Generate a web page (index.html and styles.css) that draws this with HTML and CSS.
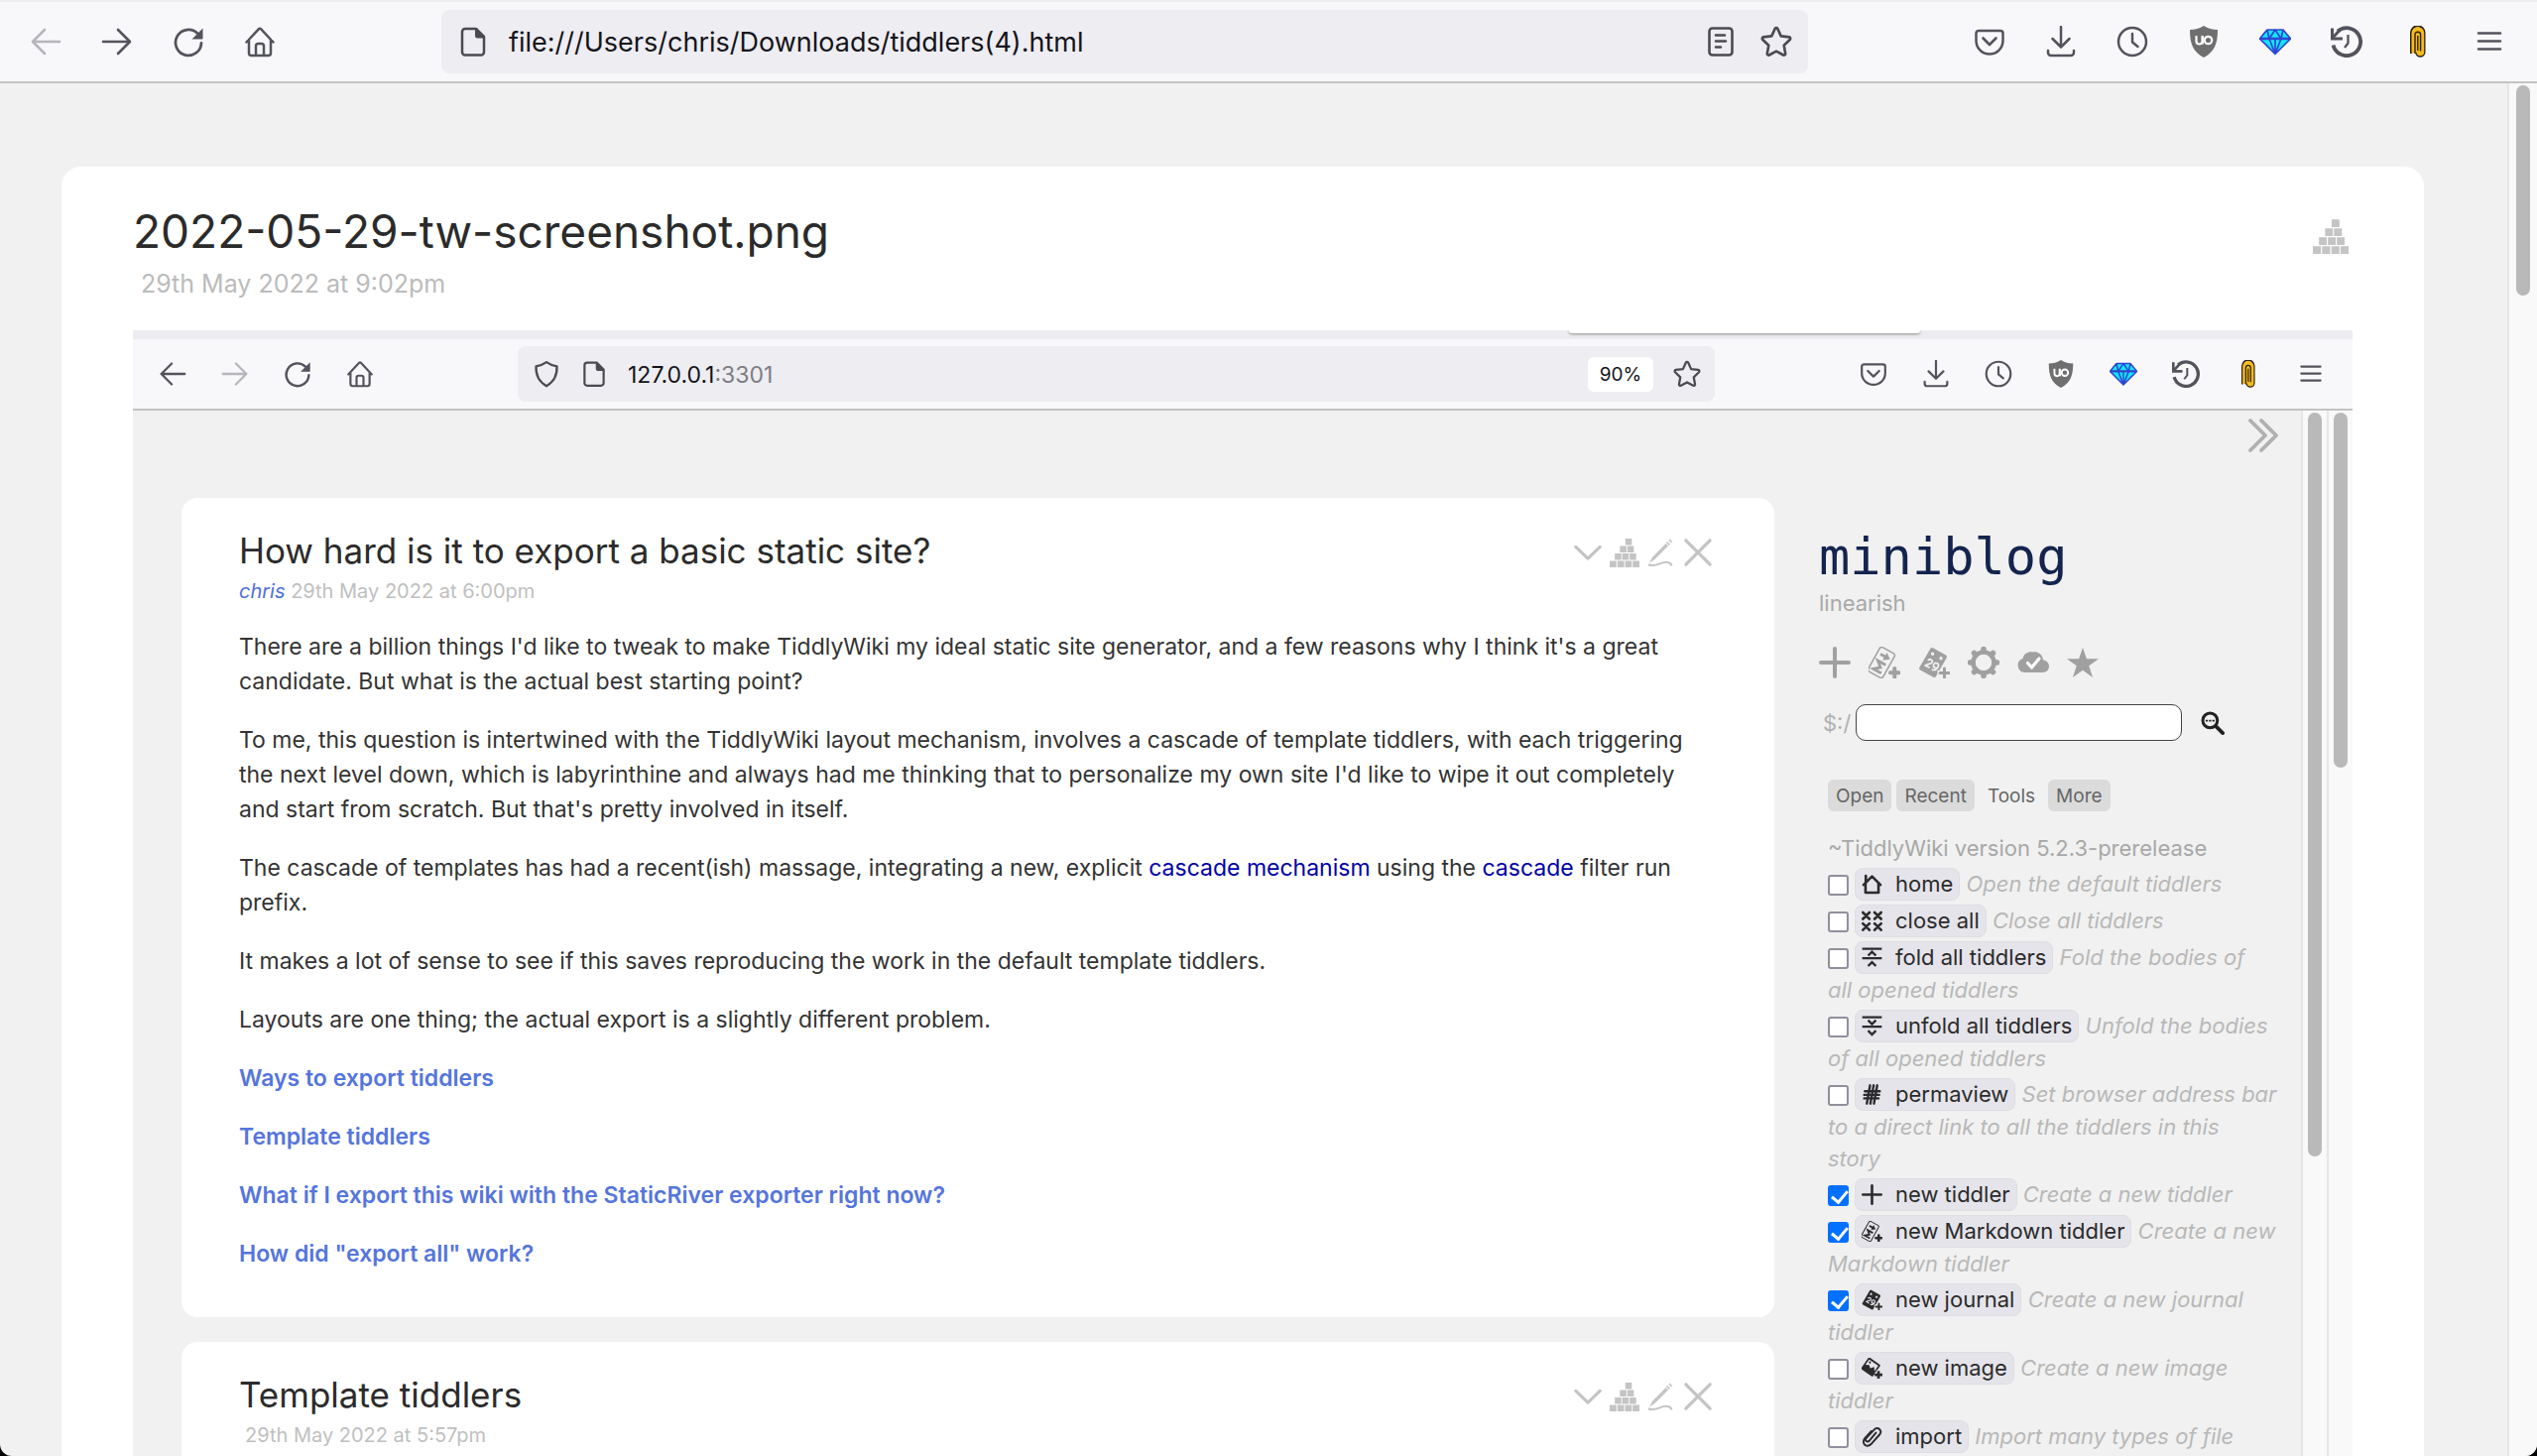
FILE: index.html
```html
<!DOCTYPE html>
<html lang="en">
<head>
<meta charset="utf-8">
<title>2022-05-29-tw-screenshot.png</title>
<link rel="stylesheet" href="styles.css">
</head>
<body>
<svg class="sprite" aria-hidden="true">
  <symbol id="i-back" viewBox="0 0 32 32"><path d="M15 4 3 16l12 12M3 16h27" fill="none" stroke="currentColor" stroke-width="2.6" stroke-linecap="round" stroke-linejoin="round"/></symbol>
  <symbol id="i-forward" viewBox="0 0 32 32"><path d="M17 4l12 12-12 12M29 16H2" fill="none" stroke="currentColor" stroke-width="2.6" stroke-linecap="round" stroke-linejoin="round"/></symbol>
  <symbol id="i-reload" viewBox="0 0 32 32"><path d="M29 17.500A13 13 0 1 1 25 7.500" fill="none" stroke="currentColor" stroke-width="2.8" stroke-linecap="round"/><path d="M30.500 2.500v10a1 1 0 0 1-1 1H19.500z" fill="currentColor"/></symbol>
  <symbol id="i-home" viewBox="0 0 32 32"><path d="M2.500 16.500 15 3.200a1.400 1.400 0 0 1 2 0L29.500 16.500M5 14v13.500A2.500 2.500 0 0 0 7.500 30h17a2.500 2.500 0 0 0 2.500-2.500V14M12 30v-9.500a2.500 2.500 0 0 1 2.500-2.500h3a2.500 2.500 0 0 1 2.500 2.500V30" fill="none" stroke="currentColor" stroke-width="2.500" stroke-linecap="round"/></symbol>
  <symbol id="i-doc" viewBox="0 0 32 32"><path d="M8 3h11l8 8v15.500a3 3 0 0 1-3 3H8a3 3 0 0 1-3-3V6a3 3 0 0 1 3-3z" fill="none" stroke="currentColor" stroke-width="2.500" stroke-linejoin="round"/><path d="M18 2v8a2.500 2.500 0 0 0 2.500 2.500H28z" fill="currentColor"/></symbol>
  <symbol id="i-shield" viewBox="0 0 32 32"><path d="M16 2.500c4 2.800 8 4.300 12 4.800.4 9-3 17.500-12 22.700C7 24.800 3.600 16.300 4 7.300c4-.5 8-2 12-4.800z" fill="none" stroke="currentColor" stroke-width="2.600" stroke-linejoin="round"/></symbol>
  <symbol id="i-reader" viewBox="0 0 32 32"><rect x="4.500" y="2.500" width="23" height="27" rx="3" fill="none" stroke="currentColor" stroke-width="2.600"/><path d="M11 9.500h9M11 15.500h10M11 21.500h5" stroke="currentColor" stroke-width="2.600" stroke-linecap="round"/></symbol>
  <symbol id="i-star-line" viewBox="0 0 32 32"><path d="M14.700 2.900a1.500 1.500 0 0 1 2.600 0l3.400 7.500 8.200 1a1.500 1.500 0 0 1 .8 2.600l-6 5.800 1.500 8.100a1.500 1.500 0 0 1-2.100 1.600L16 25.700l-7.100 3.800a1.500 1.500 0 0 1-2.100-1.600l1.500-8.100-6-5.800a1.500 1.500 0 0 1 .8-2.600l8.200-1z" fill="none" stroke="currentColor" stroke-width="2.600" stroke-linejoin="round"/></symbol>
  <symbol id="i-pocket" viewBox="0 0 32 32"><path d="M5 5h22a2.500 2.500 0 0 1 2.500 2.500V15a13.500 13.500 0 0 1-27 0V7.500A2.500 2.500 0 0 1 5 5z" fill="none" stroke="currentColor" stroke-width="2.500"/><path d="m9.500 12.500 6.500 6.500 6.500-6.500" fill="none" stroke="currentColor" stroke-width="2.600" stroke-linecap="round" stroke-linejoin="round"/></symbol>
  <symbol id="i-download" viewBox="0 0 32 32"><path d="M16 1v20M7.500 13l8.500 8.500 8.500-8.500M3 25v2a3 3 0 0 0 3 3h20a3 3 0 0 0 3-3v-2" fill="none" stroke="currentColor" stroke-width="2.500" stroke-linecap="round" stroke-linejoin="round"/></symbol>
  <symbol id="i-clock" viewBox="0 0 32 32"><circle cx="16" cy="16" r="14" fill="none" stroke="currentColor" stroke-width="2.500"/><path d="M16 8v8.500l5.500 4.500" fill="none" stroke="currentColor" stroke-width="2.500" stroke-linecap="round" stroke-linejoin="round"/></symbol>
  <symbol id="i-ublock" viewBox="0 0 32 32"><path d="M16 0c4 2.700 9 4 14 4 0 14-3 22-14 28C5 26 2 18 2 4c5 0 10-1.300 14-4z" fill="#6f6f6f"/><path d="M8.500 10v5.500a3 3 0 0 0 6 0V10M14.800 10v8.500" fill="none" stroke="#fff" stroke-width="2.200"/><circle cx="20.500" cy="14.500" r="3.700" fill="none" stroke="#fff" stroke-width="2.200"/></symbol>
  <symbol id="i-gem" viewBox="0 0 32 32"><path d="M8 4h16l7.500 9L16 28.500.5 13z" fill="#12e6fa"/><path d="M8 4h16l7.500 9L16 28.500.5 13zM.5 13h31M8 4l2 9 6 15.500L22 13l2-9M10 13l6-9 6 9M3.500 9 8 4M16 13v15.500" fill="none" stroke="#2f45d2" stroke-width="1.700" stroke-linejoin="round"/><path d="M1 13h30" stroke="#2f45d2" stroke-width="2.500"/></symbol>
  <symbol id="i-history" viewBox="0 0 32 32"><path d="M2.500 19.500A14 14 0 1 0 7 5.500" fill="none" stroke="currentColor" stroke-width="3.800"/><path d="M1.500 2.500V13h10.500" fill="none" stroke="currentColor" stroke-width="3"/><path d="M2 12 9 4.500" stroke="currentColor" stroke-width="3"/><path d="M17.500 9v8.500L14 22" fill="none" stroke="currentColor" stroke-width="2.300"/></symbol>
  <symbol id="i-clip" viewBox="0 0 32 32"><path d="M9 28V7a6.700 6.700 0 0 1 13.500 0v19.500a4.200 4.200 0 0 1-8.400 0" fill="none" stroke="#30201a" stroke-width="2"/><path d="M9.500 27.500V7.500a6.300 6.300 0 0 1 12.700 0v19a3.800 3.800 0 0 1-7.600 0H13V27.500z" fill="#f3bc17"/><path d="M13 28V9a2.600 2.600 0 0 1 5.600 0v16.500M15.800 10v15" fill="none" stroke="#30201a" stroke-width="1.400"/></symbol>
  <symbol id="i-menu" viewBox="0 0 32 32"><path d="M5 7.500h22M5 15.500h22M5 23.500h22" stroke="currentColor" stroke-width="2.600" stroke-linecap="round"/></symbol>

  <symbol id="i-pyramid" viewBox="0 0 32 32"><path d="M16.800 1h7v7h-7zM11 9h7v7h-7zM19 9h7v7h-7zM5.500 17h7v7h-7zM13.500 17h7v7h-7zM21.500 17h7v7h-7zM0 25h7.200v7H0zM8.300 25h7.200v7H8.300zM16.600 25h7.200v7h-7.200zM24.800 25H32v7h-7.200z" fill="currentColor"/></symbol>
  <symbol id="i-chevron" viewBox="0 0 32 32"><path d="m3 10 13 12.500L29 10" fill="none" stroke="currentColor" stroke-width="3.400" stroke-linecap="round" stroke-linejoin="round"/></symbol>
  <symbol id="i-pencil" viewBox="0 0 32 32"><path d="M21 6.500 23.500 9 9 23.500l-6 4L6.500 21z" fill="currentColor"/><path d="m21.800 4.800 3.200 3M24.500 2.300l3 3" stroke="currentColor" stroke-width="1.800"/><path d="M2 29c9 4 15-5 22-2 2 .8 3 1.700 3 3.500" fill="none" stroke="currentColor" stroke-width="2.200"/></symbol>
  <symbol id="i-close" viewBox="0 0 32 32"><path d="m3 3 26 26M29 3 3 29" stroke="currentColor" stroke-width="3.400" stroke-linecap="round"/></symbol>
  <symbol id="i-double" viewBox="0 0 32 36"><path d="m3 3 15 15L3 33M14 3l15 15-15 15" fill="none" stroke="currentColor" stroke-width="3.800" stroke-linecap="round" stroke-linejoin="round"/></symbol>

  <symbol id="i-plus" viewBox="0 0 32 32"><path d="M16 2v28M2 16h28" stroke="currentColor" stroke-width="4" stroke-linecap="round"/></symbol>
  <symbol id="i-markdown" viewBox="0 0 32 32"><g transform="rotate(-61 13 16)"><rect x="-1" y="7.500" width="28" height="17" rx="2.500" fill="none" stroke="currentColor" stroke-width="1.500"/><path d="M3.500 21v-9l4.700 5.500 4.700-5.500v9" fill="none" stroke="currentColor" stroke-width="2.800"/><path d="M20 11v8" stroke="currentColor" stroke-width="2.800"/><path d="M15.500 16h9L20 22z" fill="currentColor"/></g><path d="M26.300 22v8.500M22 26.300h8.500" stroke="currentColor" stroke-width="4" stroke-linecap="round"/></symbol>
  <symbol id="i-journal" viewBox="0 0 32 32"><path fill-rule="evenodd" d="M15 1.200 28 8.500a2 2 0 0 1 .8 2.600L18 30a2 2 0 0 1-2.600.8L2 23.500a2 2 0 0 1-.7-2.600L12.400 2a2 2 0 0 1 2.600-.8zM14.500 5.500a1.700 1.700 0 1 0 .1 0zM23 10a1.700 1.700 0 1 0 .1 0z" fill="currentColor"/><g transform="rotate(28 14 18)"><path d="M8.500 16.500c.5-3.500 5-3 4.500 0-.3 2-4 3.500-4.500 5.500H13.500M20.500 17a2.500 2.500 0 1 0-2.500 2.500c1.500 0 2.500-1 2.500-2.500 0 3.500-1 5.500-4.500 5.500" fill="none" stroke="#f1f1f1" stroke-width="1.700"/></g><path d="M26.500 19.500v14M19.500 26.500H33" stroke="#f1f1f1" stroke-width="5.500"/><path d="M26.500 22v9M22 26.500h9" stroke="currentColor" stroke-width="3" stroke-linecap="round"/></symbol>
  <symbol id="i-gear" viewBox="0 0 32 32"><circle cx="16" cy="16" r="10.500" fill="none" stroke="currentColor" stroke-width="4.500"/><path d="M16 2.500V5M16 27v2.500M2.500 16H5M27 16h2.500M6.500 6.500l1.700 1.700M23.800 23.800l1.700 1.700M25.500 6.500l-1.700 1.700M8.200 23.800l-1.700 1.700" stroke="currentColor" stroke-width="5.500" stroke-linecap="round"/></symbol>
  <symbol id="i-cloud" viewBox="0 0 32 32"><path d="M7.500 26A7.200 7.200 0 0 1 5.500 12 C6.500 6.500 12 4.500 15.500 5.500c4-1 10 1.500 10.500 8C30 14 32 17 32 20s-2.500 6-6.500 6z" fill="currentColor"/><path d="m10.500 16.500 4 4.500 7.500-9" fill="none" stroke="#fff" stroke-width="3.200" stroke-linecap="round" stroke-linejoin="round"/></symbol>
  <symbol id="i-star" viewBox="0 0 32 32"><path d="m16 1 3.900 11.300H32l-9.700 7L26 31l-10-7.200L6 31l3.700-11.700-9.700-7h12.100z" fill="currentColor"/></symbol>
  <symbol id="i-search" viewBox="0 0 32 32"><circle cx="12.500" cy="12.500" r="9.800" fill="none" stroke="currentColor" stroke-width="4"/><path d="m20.500 20.500 9 9" stroke="currentColor" stroke-width="5" stroke-linecap="round"/><path d="M6.500 11.500h3v2.500h-3zM11 11.500h3v2.500h-3zM15.500 11.500h3v2.500h-3z" fill="currentColor"/></symbol>
  <symbol id="i-house" viewBox="0 0 32 32"><path d="M3 17 16 4l13 13M6 15v14h20V15M6.500 3v9" fill="none" stroke="currentColor" stroke-width="4" stroke-linecap="round" stroke-linejoin="round"/></symbol>
  <symbol id="i-closeall" viewBox="0 0 32 32"><path d="m2 3 10 10M12 3 2 13M20 3l10 10M30 3 20 13M2 20l10 10M12 20 2 30M20 20l10 10M30 20 20 30" stroke="currentColor" stroke-width="4" stroke-linecap="round"/></symbol>
  <symbol id="i-fold" viewBox="0 0 32 32"><path d="M1 2.500h30M1 17h30M10 13l6-6 6 6M10 29l6-6 6 6" fill="none" stroke="currentColor" stroke-width="3.600"/></symbol>
  <symbol id="i-unfold" viewBox="0 0 32 32"><path d="M1 2.500h30M1 17h30M10 7l6 6 6-6M10 23l6 6 6-6" fill="none" stroke="currentColor" stroke-width="3.600"/></symbol>
  <symbol id="i-hash" viewBox="0 0 32 32"><path d="M13 2 8 30M18.500 2l-5 28M24 2l-5 28M5 11h23M4 16.500h23M4 22h22" stroke="currentColor" stroke-width="3.600" stroke-linecap="round"/></symbol>
  <symbol id="i-image" viewBox="0 0 32 32"><g transform="rotate(35 14 14)"><rect x="3" y="3" width="22" height="22" rx="2" fill="currentColor"/><path d="M5.500 6h17v10l-4-5-4 5-4-3-5 3z" fill="#e5e4ea"/><circle cx="9" cy="9" r="1.600" fill="currentColor"/></g><path d="M26 19v13M20 26h12" stroke="#e5e4ea" stroke-width="7"/><path d="M26 20v12M20 26h12" stroke="currentColor" stroke-width="4"/></symbol>
  <symbol id="i-attach" viewBox="0 0 32 32"><path d="M22 10 11.500 22.500a3 3 0 0 1-4.500-4L19 5.500c3-3.500 6.500-3 8.500-1s2.500 5.500 0 8.500L14.500 27.500c-3 3-7 3-9.500 1s-3-6.500 0-10L15 7.500" fill="none" stroke="currentColor" stroke-width="3" stroke-linecap="round"/></symbol>
</svg>

<div class="window">
  <header class="chrome">
    <nav class="chrome-group">
      <button class="tool tool-off" aria-label="Back"><svg><use href="#i-back"/></svg></button>
      <button class="tool" aria-label="Forward"><svg><use href="#i-forward"/></svg></button>
      <button class="tool" aria-label="Reload"><svg><use href="#i-reload"/></svg></button>
      <button class="tool" aria-label="Home"><svg><use href="#i-home"/></svg></button>
    </nav>
    <div class="address">
      <svg class="address-icon"><use href="#i-doc"/></svg>
      <input class="address-input" type="text" aria-label="Address" value="file:///Users/chris/Downloads/tiddlers(4).html">
      <button class="address-button" aria-label="Reader view"><svg><use href="#i-reader"/></svg></button>
      <button class="address-button" aria-label="Bookmark"><svg><use href="#i-star-line"/></svg></button>
    </div>
    <div class="chrome-group">
      <button class="tool" aria-label="Pocket"><svg><use href="#i-pocket"/></svg></button>
      <button class="tool" aria-label="Downloads"><svg><use href="#i-download"/></svg></button>
      <button class="tool" aria-label="Recent"><svg><use href="#i-clock"/></svg></button>
      <button class="tool" aria-label="uBlock"><svg><use href="#i-ublock"/></svg></button>
      <button class="tool" aria-label="Gem"><svg><use href="#i-gem"/></svg></button>
      <button class="tool" aria-label="History"><svg><use href="#i-history"/></svg></button>
      <button class="tool" aria-label="Clip"><svg><use href="#i-clip"/></svg></button>
      <button class="tool" aria-label="Menu"><svg><use href="#i-menu"/></svg></button>
    </div>
  </header>

  <div class="viewport">
    <main class="page">
      <article class="tiddler">
        <div class="tiddler-head">
          <h1 class="tiddler-title">2022-05-29-tw-screenshot.png</h1>
          <button class="tiddler-tool" aria-label="Pyramid"><svg><use href="#i-pyramid"/></svg></button>
        </div>
        <p class="tiddler-date">29th May 2022 at 9:02pm</p>

        <div class="shot">
          <div class="shot-tabs"><div class="shot-tab"></div></div>
          <header class="chrome chrome-small">
            <nav class="chrome-group">
              <button class="tool" aria-label="Back"><svg><use href="#i-back"/></svg></button>
              <button class="tool tool-off" aria-label="Forward"><svg><use href="#i-forward"/></svg></button>
              <button class="tool" aria-label="Reload"><svg><use href="#i-reload"/></svg></button>
              <button class="tool" aria-label="Home"><svg><use href="#i-home"/></svg></button>
            </nav>
            <div class="address">
              <svg class="address-icon"><use href="#i-shield"/></svg>
              <svg class="address-icon"><use href="#i-doc"/></svg>
              <div class="address-input" role="textbox" aria-label="Address" contenteditable="true">127.0.0.1<span class="port">:3301</span></div>
              <button class="zoom-level">90%</button>
              <button class="address-button" aria-label="Bookmark"><svg><use href="#i-star-line"/></svg></button>
            </div>
            <div class="chrome-group">
              <button class="tool" aria-label="Pocket"><svg><use href="#i-pocket"/></svg></button>
              <button class="tool" aria-label="Downloads"><svg><use href="#i-download"/></svg></button>
              <button class="tool" aria-label="Recent"><svg><use href="#i-clock"/></svg></button>
              <button class="tool" aria-label="uBlock"><svg><use href="#i-ublock"/></svg></button>
              <button class="tool" aria-label="Gem"><svg><use href="#i-gem"/></svg></button>
              <button class="tool" aria-label="History"><svg><use href="#i-history"/></svg></button>
              <button class="tool" aria-label="Clip"><svg><use href="#i-clip"/></svg></button>
              <button class="tool" aria-label="Menu"><svg><use href="#i-menu"/></svg></button>
            </div>
          </header>

          <div class="wiki">
            <button class="hide-sidebar" aria-label="Hide sidebar"><svg><use href="#i-double"/></svg></button>
            <div class="river">
              <article class="card">
                <div class="card-head">
                  <h2 class="card-title">How hard is it to export a basic static site?</h2>
                  <div class="card-tools">
                    <button class="card-tool" aria-label="More"><svg><use href="#i-chevron"/></svg></button>
                    <button class="card-tool" aria-label="Pyramid"><svg><use href="#i-pyramid"/></svg></button>
                    <button class="card-tool" aria-label="Edit"><svg><use href="#i-pencil"/></svg></button>
                    <button class="card-tool" aria-label="Close"><svg><use href="#i-close"/></svg></button>
                  </div>
                </div>
                <p class="card-date"><a class="author" href="#chris">chris</a> 29th May 2022 at 6:00pm</p>
                <p class="text">There are a billion things I'd like to tweak to make TiddlyWiki my ideal static site generator, and a few reasons why I think it's a great candidate. But what is the actual best starting point?</p>
                <p class="text">To me, this question is intertwined with the TiddlyWiki layout mechanism, involves a cascade of template tiddlers, with each triggering the next level down, which is labyrinthine and always had me thinking that to personalize my own site I'd like to wipe it out completely and start from scratch. But that's pretty involved in itself.</p>
                <p class="text">The cascade of templates has had a recent(ish) massage, integrating a new, explicit <a class="external" href="#mechanism">cascade mechanism</a> using the <a class="external" href="#cascade">cascade</a> filter run prefix.</p>
                <p class="text">It makes a lot of sense to see if this saves reproducing the work in the default template tiddlers.</p>
                <p class="text">Layouts are one thing; the actual export is a slightly different problem.</p>
                <p class="text"><a class="internal" href="#ways">Ways to export tiddlers</a></p>
                <p class="text"><a class="internal" href="#template">Template tiddlers</a></p>
                <p class="text"><a class="internal" href="#river">What if I export this wiki with the StaticRiver exporter right now?</a></p>
                <p class="text"><a class="internal" href="#all">How did "export all" work?</a></p>
              </article>
              <article class="card">
                <div class="card-head">
                  <h2 class="card-title">Template tiddlers</h2>
                  <div class="card-tools">
                    <button class="card-tool" aria-label="More"><svg><use href="#i-chevron"/></svg></button>
                    <button class="card-tool" aria-label="Pyramid"><svg><use href="#i-pyramid"/></svg></button>
                    <button class="card-tool" aria-label="Edit"><svg><use href="#i-pencil"/></svg></button>
                    <button class="card-tool" aria-label="Close"><svg><use href="#i-close"/></svg></button>
                  </div>
                </div>
                <p class="card-date card-date-plain">29th May 2022 at 5:57pm</p>
              </article>
            </div>

            <aside class="sidebar">
              <h1 class="site-title">miniblog</h1>
              <p class="site-subtitle">linearish</p>
              <div class="page-tools">
                <button class="page-tool" aria-label="New tiddler"><svg><use href="#i-plus"/></svg></button>
                <button class="page-tool" aria-label="New Markdown tiddler"><svg><use href="#i-markdown"/></svg></button>
                <button class="page-tool" aria-label="New journal"><svg><use href="#i-journal"/></svg></button>
                <button class="page-tool" aria-label="Settings"><svg><use href="#i-gear"/></svg></button>
                <button class="page-tool" aria-label="Save"><svg><use href="#i-cloud"/></svg></button>
                <button class="page-tool" aria-label="Favourites"><svg><use href="#i-star"/></svg></button>
              </div>
              <div class="search">
                <label class="search-label" for="search">$:/</label>
                <input class="search-input" id="search" type="text">
                <button class="search-button" aria-label="Advanced search"><svg><use href="#i-search"/></svg></button>
              </div>
              <div class="tabs">
                <button class="tab">Open</button>
                <button class="tab">Recent</button>
                <button class="tab tab-active">Tools</button>
                <button class="tab">More</button>
              </div>
              <div class="tools">
                <p class="version">~TiddlyWiki version 5.2.3-prerelease</p>
                <div class="row"><input class="tick" type="checkbox" aria-label="Show home"><button class="action"><svg><use href="#i-house"/></svg>home</button> <i class="hint">Open the default tiddlers</i></div>
                <div class="row"><input class="tick" type="checkbox" aria-label="Show close all"><button class="action"><svg><use href="#i-closeall"/></svg>close all</button> <i class="hint">Close all tiddlers</i></div>
                <div class="row"><input class="tick" type="checkbox" aria-label="Show fold all"><button class="action"><svg><use href="#i-fold"/></svg>fold all tiddlers</button> <i class="hint">Fold the bodies of all&nbsp;opened tiddlers</i></div>
                <div class="row"><input class="tick" type="checkbox" aria-label="Show unfold all"><button class="action"><svg><use href="#i-unfold"/></svg>unfold all tiddlers</button> <i class="hint">Unfold the bodies of all opened tiddlers</i></div>
                <div class="row"><input class="tick" type="checkbox" aria-label="Show permaview"><button class="action"><svg><use href="#i-hash"/></svg>permaview</button> <i class="hint">Set browser address bar to a direct link to all the tiddlers in this<br>story</i></div>
                <div class="row"><input class="tick" type="checkbox" checked aria-label="Show new tiddler"><button class="action"><svg><use href="#i-plus"/></svg>new tiddler</button> <i class="hint">Create a new tiddler</i></div>
                <div class="row"><input class="tick" type="checkbox" checked aria-label="Show new Markdown tiddler"><button class="action"><svg><use href="#i-markdown"/></svg>new Markdown tiddler</button> <i class="hint">Create a new Markdown tiddler</i></div>
                <div class="row"><input class="tick" type="checkbox" checked aria-label="Show new journal"><button class="action"><svg><use href="#i-journal"/></svg>new journal</button> <i class="hint">Create a new journal tiddler</i></div>
                <div class="row"><input class="tick" type="checkbox" aria-label="Show new image"><button class="action"><svg><use href="#i-image"/></svg>new image</button> <i class="hint">Create a new image tiddler</i></div>
                <div class="row"><input class="tick" type="checkbox" aria-label="Show import"><button class="action"><svg><use href="#i-attach"/></svg>import</button> <i class="hint">Import many types of file</i></div>
              </div>
            </aside>
            <div class="track track-inner"><div class="thumb thumb-long"></div></div>
            <div class="track track-inner"><div class="thumb thumb-mid"></div></div>
          </div>
        </div>
      </article>
    </main>
    <div class="track"><div class="thumb thumb-short"></div></div>
  </div>
</div>
</body>
</html>
```
FILE: styles.css
```css
* { box-sizing: border-box; }
html { background: #000; }
body {
  margin: 0;
  font-family: Inter, "Liberation Sans", sans-serif;
  color: #333;
}
h1, h2, p { margin: 0; font-weight: 400; }
a { text-decoration: none; }
button {
  margin: 0;
  padding: 0;
  border: 0;
  background: none;
  color: inherit;
  font: inherit;
}
svg { display: block; overflow: visible; }
.sprite { position: absolute; width: 0; height: 0; }

.window {
  display: flex;
  flex-direction: column;
  height: 100vh;
  overflow: hidden;
  background: #f1f1f1;
  border-radius: 0 0 12px 12px;
}

/* browser toolbar */
.chrome {
  display: flex;
  flex: none;
  align-items: center;
  gap: 147px;
  height: 84px;
  padding: 0 12px 0 10px;
  background: #f8f8fb;
  border-top: 2px solid #eeeef0;
  border-bottom: 2px solid #c3c3c5;
  color: #53535d;
}
.chrome-group { display: flex; }
.tool { display: grid; place-items: center; width: 72px; height: 64px; }
.tool svg { width: 32px; height: 32px; }
.tool-off { opacity: .4; }
.address {
  display: flex;
  flex: 1;
  align-items: center;
  height: 64px;
  padding: 0 16px;
  background: #ededf2;
  border-radius: 8px;
  color: #4a4a50;
}
.address-icon { flex: none; width: 32px; height: 32px; margin-right: 20px; }
.address-input {
  flex: 1;
  min-width: 0;
  padding: 2px 0 0;
  border: 0;
  outline: 0;
  background: none;
  color: #15141a;
  font: 400 27px/40px Inter, "Liberation Sans", sans-serif;
}
.address-button { margin-left: 24px; }
.address-button svg { width: 32px; height: 32px; }

.chrome-small { gap: 128px; height: 72px; padding: 0 11px 0 8px; border-top: 0; }
.chrome-small .tool { width: 63px; height: 56px; }
.chrome-small .tool svg,
.chrome-small .address-icon,
.chrome-small .address-button svg { width: 28px; height: 28px; }
.chrome-small .address { height: 56px; padding: 0 14px 0 15px; }
.chrome-small .address-icon { margin-right: 20px; }
.chrome-small .address-input { font-size: 23px; }
.port { color: #7d7d84; }
.zoom-level {
  width: 66px;
  height: 35px;
  background: #fff;
  border-radius: 6px;
  color: #15141a;
  font-size: 19px;
}
.chrome-small .address-button { margin-left: 20px; }

/* scrollbars */
.viewport { display: flex; flex: 1; min-height: 0; }
.track {
  flex: none;
  width: 30px;
  padding: 2px 7px;
  background: #f9f9f9;
  border-left: 2px solid #e6e6e6;
}
.track-inner { width: 26px; padding: 2px 5px; }
.thumb { border-radius: 8px; background: #b9b9b9; }
.thumb-short { height: 212px; }
.thumb-mid { height: 358px; }
.thumb-long { height: 750px; }

/* outer page */
.page { flex: 1; min-width: 0; overflow: hidden; padding: 84px 84px 0 62px; }
.tiddler { padding: 35px 72px 0; background: #fff; border-radius: 20px; }
.tiddler-head { display: flex; align-items: center; justify-content: space-between; }
.tiddler-title { font-size: 46px; line-height: 60px; color: #2b2b2b; }
.tiddler-tool { color: #c4c4c4; padding: 10px 4px 0; }
.tiddler-tool svg { width: 36px; height: 36px; }
.tiddler-date { padding: 2px 0 0 8px; font-size: 25px; line-height: 42px; color: #bbb; }

/* embedded browser */
.shot { margin-top: 26px; }
.shot-tabs { height: 9px; overflow: hidden; background: #ededf1; }
.shot-tab {
  width: 354px;
  height: 3px;
  margin: 0 436px 0 auto;
  background: #fff;
  border-radius: 0 0 6px 6px;
  box-shadow: 0 1px 3px #888;
}
.wiki { position: relative; display: flex; background: #f1f1f1; }
.hide-sidebar { position: absolute; top: 7px; right: 74px; color: #b0b0b0; }
.hide-sidebar svg { width: 32px; height: 36px; }
.river {
  display: flex;
  flex: 1;
  flex-direction: column;
  gap: 25px;
  min-width: 0;
  padding: 88px 0 60px 49px;
}
.card { padding: 29px 62px 46px 58px; background: #fff; border-radius: 16px; }
.card-head { display: flex; align-items: center; justify-content: space-between; }
.card-title { font-size: 35px; line-height: 48px; color: #2b2b2b; }
.card-tools { display: flex; gap: 7px; padding-top: 4px; color: #c4c4c4; }
.card-tool svg { width: 30px; height: 30px; }
.card-date { padding-top: 2px; font-size: 20px; line-height: 30px; color: #c0c0c0; }
.card-date-plain { padding-left: 6px; }
.author { color: #4f6fdb; font-style: italic; }
.text { margin-top: 24px; font-size: 23px; line-height: 35px; }
.external { color: #0000a8; }
.internal { color: #5575dc; font-weight: 600; }

/* wiki sidebar */
.sidebar { flex: none; width: 531px; padding: 117px 20px 0 45px; }
.site-title {
  font-family: "DejaVu Sans Mono", monospace;
  font-size: 52px;
  line-height: 60px;
  color: #14244f;
}
.site-subtitle { font-size: 22px; line-height: 34px; color: #a8a8a8; }
.page-tools { display: flex; gap: 18px; margin-top: 27px; color: #a0a0a0; }
.page-tool svg { width: 32px; height: 32px; }
.search { display: flex; align-items: center; margin-top: 26px; }
.search-label { width: 37px; padding-left: 4px; font-size: 22px; color: #b0b0b0; }
.search-input {
  width: 329px;
  height: 37px;
  padding: 0 8px;
  border: 1px solid #444;
  border-radius: 10px;
  background: #fff;
  font: 400 22px Inter, sans-serif;
}
.search-button { margin-left: 19px; color: #222; }
.search-button svg { width: 24px; height: 24px; }
.tabs { display: flex; gap: 5px; margin: 39px 0 0 9px; }
.tab {
  height: 32px;
  padding: 0 8px;
  border-radius: 6px;
  background: #dbdbdb;
  color: #666;
  font-size: 19px;
}
.tab-active { background: none; }
.tools { margin: 21px 0 0 9px; font-size: 22px; line-height: 32px; }
.version { color: #a8a8a8; }
.tick {
  position: relative;
  appearance: none;
  width: 21px;
  height: 21px;
  margin: 0 6px 0 0;
  border: 2px solid #8f8f9d;
  border-radius: 3px;
  background: #fff;
  vertical-align: -4px;
}
.tick:checked { border-color: #0070ff; background: #0070ff; }
.tick:checked::after {
  content: "";
  position: absolute;
  left: 5px;
  top: 0;
  width: 7px;
  height: 13px;
  border: solid #fff;
  border-width: 0 3px 3px 0;
  transform: rotate(40deg);
}
.action {
  height: 33px;
  margin-top: 4px;
  padding: 0 6px;
  border: 1px solid #dedee2;
  border-radius: 8px;
  background: #e5e4ea;
  color: #2b2b2b;
  line-height: 31px;
}
.action svg {
  display: inline-block;
  width: 21px;
  height: 21px;
  margin-right: 13px;
  vertical-align: -3px;
}
.hint { color: #b8b8b8; }
```
